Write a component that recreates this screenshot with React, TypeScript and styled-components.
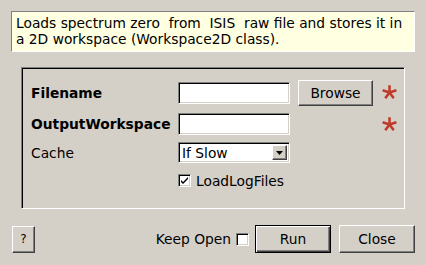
import React, { useState } from "react"
import styled, { createGlobalStyle, css } from "styled-components"

const GlobalStyle = createGlobalStyle`
    html, body {
        margin: 0;
        padding: 0;
        background: #d4d0c8;
    }
    body {
        font-family: "DejaVu Sans", "Liberation Sans", sans-serif;
        font-size: 13.8px;
        color: #000;
    }
`

const sunken = css`
    border-style: solid;
    border-width: 1px;
    border-color: #808080 #ffffff #ffffff #808080;
    box-shadow: inset 1px 1px 0 #000, inset -1px -1px 0 #d4d0c8;
`

const raised = css`
    border-style: solid;
    border-width: 1px;
    border-color: #ffffff #404040 #404040 #ffffff;
    box-shadow: inset -1px -1px 0 #808080;
`

const Root = styled.div`
    width: 426px;
    height: 265px;
    box-sizing: border-box;
    padding: 11px 11px 0 11px;
    display: flex;
    flex-direction: column;
`

const Description = styled.div`
    height: 41px;
    box-sizing: border-box;
    background: #ffffe1;
    border-style: solid;
    border-width: 1px;
    border-color: #808080 #ffffff #ffffff #808080;
    padding: 3px 0 0 4px;
    line-height: 16px;
    white-space: pre;
`

const GroupBox = styled.div`
    margin: 15px 10px 0 10px;
    height: 142px;
    box-sizing: border-box;
    border-style: solid;
    border-width: 1px;
    border-color: #808080 #ffffff #ffffff #808080;
    box-shadow: inset 1px 1px 0 #000, inset -1px -1px 0 #d4d0c8;
    padding: 11px 0 0 9px;
    display: grid;
    grid-template-columns: 139px 112px 75px 24px;
    grid-template-rows: 27px 22px 21px 21px;
    column-gap: 8px;
    row-gap: 7px;
    align-items: center;
    align-content: start;
`

const Rows = styled.div`
    display: contents;
`

const Label = styled.span<{ $bold?: boolean }>`
    font-weight: ${(p) => (p.$bold ? "bold" : "normal")};
    grid-column: 1;
    white-space: nowrap;
`

const TextInput = styled.div`
    ${sunken};
    background: #fff;
    height: 22px;
    box-sizing: border-box;
    grid-column: 2;
`

const Combo = styled.div`
    ${sunken};
    background: #fff;
    height: 21px;
    box-sizing: border-box;
    grid-column: 2;
    display: flex;
    align-items: center;
    justify-content: space-between;
    padding: 2px 2px 2px 3px;
`

const ComboArrow = styled.div`
    ${raised};
    background: #d4d0c8;
    width: 15px;
    height: 15px;
    box-sizing: border-box;
    display: flex;
    align-items: center;
    justify-content: center;
`

const Button = styled.button<{ $default?: boolean }>`
    ${raised};
    background: #d4d0c8;
    font-family: inherit;
    font-size: inherit;
    color: #000;
    padding: 0;
    box-sizing: border-box;
    ${(p) =>
        p.$default &&
        css`
            border-color: #000;
            box-shadow: inset 1px 1px 0 #fff, inset -1px -1px 0 #404040, inset -2px -2px 0 #808080;
        `}
`

const BrowseButton = styled(Button)`
    grid-column: 3;
    height: 26px;
`

const Required = styled.div`
    grid-column: 4;
    display: flex;
    align-items: center;
`

const CheckRow = styled.label`
    grid-column: 2 / span 3;
    display: flex;
    align-items: center;
    gap: 5px;
`

const CheckBox = styled.span`
    ${sunken};
    background: #fff;
    width: 13px;
    height: 13px;
    box-sizing: border-box;
    display: inline-flex;
    align-items: center;
    justify-content: center;
`

const Footer = styled.div`
    margin-top: 16px;
    display: flex;
    align-items: center;
    padding-left: 1px;
`

const HelpButton = styled(Button)`
    width: 23px;
    height: 27px;
    font-size: 12px;
`

const Spacer = styled.div`
    flex: 1;
`

const KeepOpen = styled.label`
    display: flex;
    align-items: center;
    gap: 5px;
    margin-right: 6px;
`

const FooterButton = styled(Button)`
    width: 76px;
    height: 28px;
    & + & {
        margin-left: 8px;
    }
`

const Asterisk = () => (
    <svg width="17" height="17" viewBox="-10 -10 20 20">
        {[0, 72, 144, 216, 288].map((a) => (
            <line
                key={a}
                x1="0"
                y1="0"
                x2={8.5 * Math.sin((a * Math.PI) / 180)}
                y2={-8.5 * Math.cos((a * Math.PI) / 180)}
                stroke="#c0392b"
                strokeWidth="3"
            />
        ))}
    </svg>
)

const Check = () => (
    <svg width="9" height="9" viewBox="0 0 9 9">
        <path d="M1 4 L3 6 L8 1 L8 3 L3 8 L1 6 Z" fill="#000" />
    </svg>
)

const DownArrow = () => (
    <svg width="7" height="4" viewBox="0 0 7 4">
        <path d="M0 0 H7 L3.5 4 Z" fill="#000" />
    </svg>
)

export default function App() {
    const [loadLogs, setLoadLogs] = useState(true)
    const [keepOpen, setKeepOpen] = useState(false)

    return (
        <Root>
            <GlobalStyle />
            <Description>
                {"Loads spectrum zero  from  ISIS  raw file and stores it in\na 2D workspace (Workspace2D class)."}
            </Description>

            <GroupBox>
                <Rows>
                    <Label $bold>Filename</Label>
                    <TextInput />
                    <BrowseButton>Browse</BrowseButton>
                    <Required>
                        <Asterisk />
                    </Required>
                </Rows>
                <Rows>
                    <Label $bold>OutputWorkspace</Label>
                    <TextInput />
                    <span />
                    <Required>
                        <Asterisk />
                    </Required>
                </Rows>
                <Rows>
                    <Label>Cache</Label>
                    <Combo>
                        <span>If Slow</span>
                        <ComboArrow>
                            <DownArrow />
                        </ComboArrow>
                    </Combo>
                </Rows>
                <Rows>
                    <CheckRow onClick={() => setLoadLogs(!loadLogs)}>
                        <CheckBox>{loadLogs && <Check />}</CheckBox>
                        LoadLogFiles
                    </CheckRow>
                </Rows>
            </GroupBox>

            <Footer>
                <HelpButton>?</HelpButton>
                <Spacer />
                <KeepOpen onClick={() => setKeepOpen(!keepOpen)}>
                    Keep Open
                    <CheckBox>{keepOpen && <Check />}</CheckBox>
                </KeepOpen>
                <FooterButton $default>Run</FooterButton>
                <FooterButton>Close</FooterButton>
            </Footer>
        </Root>
    )
}
